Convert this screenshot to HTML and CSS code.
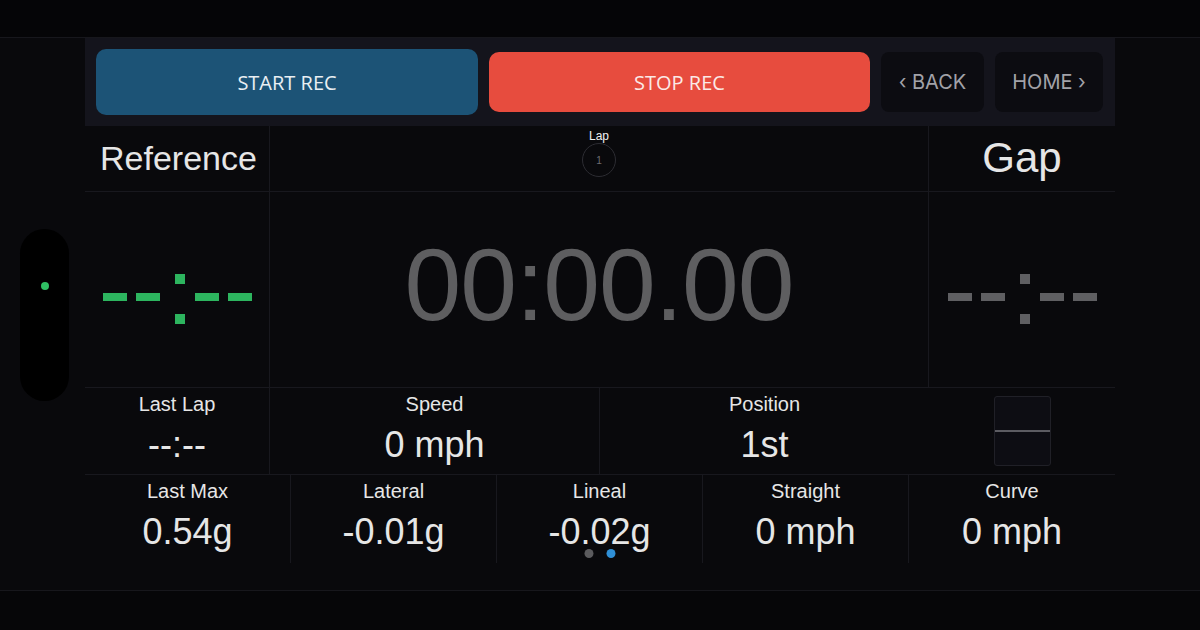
FILE: index.html
```html
<!DOCTYPE html>
<html lang="en">
<head>
    <meta charset="UTF-8">
    <meta name="viewport" content="width=device-width, initial-scale=1.0">
    <title>Lap Timer</title>
    <link rel="stylesheet" href="styles.css">
</head>
<body>
    <div class="statusbar"></div>

    <div class="main">
        <div class="side">
            <div class="pill"><span class="pill-dot"></span></div>
        </div>

        <div class="panel">
            <div class="toolbar">
                <button class="btn btn-start">START REC</button>
                <button class="btn btn-stop">STOP REC</button>
                <button class="btn btn-nav btn-back">&lsaquo; BACK</button>
                <button class="btn btn-nav btn-home">HOME &rsaquo;</button>
            </div>

            <div class="board">
                <div class="cell cell-title">Reference</div>
                <div class="cell cell-lap wide">
                    <span class="lap-label">Lap</span>
                    <span class="lap-num">1</span>
                </div>
                <div class="cell cell-gap">Gap</div>

                <div class="cell cell-dash">
                    <svg class="dash green" width="149" height="50" viewBox="0 0 149 50">
                        <rect x="0" y="19" width="24" height="8"/>
                        <rect x="33" y="19" width="24" height="8"/>
                        <rect x="72" y="0" width="10" height="10"/>
                        <rect x="72" y="40" width="10" height="10"/>
                        <rect x="92" y="19" width="24" height="8"/>
                        <rect x="125" y="19" width="24" height="8"/>
                    </svg>
                </div>
                <div class="cell cell-timer wide">00:00.00</div>
                <div class="cell cell-dash">
                    <svg class="dash grey" width="149" height="50" viewBox="0 0 149 50">
                        <rect x="0" y="19" width="24" height="8"/>
                        <rect x="33" y="19" width="24" height="8"/>
                        <rect x="72" y="0" width="10" height="10"/>
                        <rect x="72" y="40" width="10" height="10"/>
                        <rect x="92" y="19" width="24" height="8"/>
                        <rect x="125" y="19" width="24" height="8"/>
                    </svg>
                </div>

                <div class="cell stat">
                    <span class="stat-label">Last Lap</span>
                    <span class="stat-value">--:--</span>
                </div>
                <div class="cell stat">
                    <span class="stat-label">Speed</span>
                    <span class="stat-value">0 mph</span>
                </div>
                <div class="cell stat">
                    <span class="stat-label">Position</span>
                    <span class="stat-value">1st</span>
                </div>
                <div class="cell cell-meter">
                    <div class="meter"><span class="meter-line"></span></div>
                </div>
            </div>

            <div class="gforce">
                <div class="stat">
                    <span class="stat-label">Last Max</span>
                    <span class="stat-value">0.54g</span>
                </div>
                <div class="stat">
                    <span class="stat-label">Lateral</span>
                    <span class="stat-value">-0.01g</span>
                </div>
                <div class="stat">
                    <span class="stat-label">Lineal</span>
                    <span class="stat-value">-0.02g</span>
                </div>
                <div class="stat">
                    <span class="stat-label">Straight</span>
                    <span class="stat-value">0 mph</span>
                </div>
                <div class="stat">
                    <span class="stat-label">Curve</span>
                    <span class="stat-value">0 mph</span>
                </div>
            </div>

            <div class="pager">
                <span class="pager-dot"></span>
                <span class="pager-dot active"></span>
            </div>
        </div>

        <div class="side"></div>
    </div>

    <div class="homebar"></div>
</body>
</html>
```

FILE: styles.css
```css
body {
    margin: 0;
    height: 630px;
    display: flex;
    flex-direction: column;
    background-color: #09090c;
    color: #e6e6e6;
    font-family: "Liberation Sans", Arial, sans-serif;
    overflow: hidden;
}
.statusbar {
    height: 37px;
    background-color: #050507;
    border-bottom: 1px solid #17171c;
}
.homebar {
    height: 39px;
    background-color: #060608;
    border-top: 1px solid #17171c;
}
.main {
    flex: 1;
    display: flex;
}
.side {
    width: 85px;
    display: flex;
    align-items: center;
    justify-content: center;
}
.pill {
    width: 49px;
    height: 172px;
    margin-left: 4px;
    margin-top: 1px;
    border-radius: 25px;
    background-color: #000;
    display: flex;
    justify-content: center;
}
.pill-dot {
    width: 8px;
    height: 8px;
    margin-top: 53px;
    border-radius: 50%;
    background-color: #2fbf63;
}
.panel {
    width: 1030px;
    position: relative;
}

/* barra de botones */
.toolbar {
    height: 88px;
    box-sizing: border-box;
    padding: 11px 12px 11px 11px;
    display: flex;
    align-items: center;
    gap: 11px;
    background-color: #14141c;
}
.btn {
    border: none;
    padding: 0;
    font-size: 19px;
    cursor: pointer;
}
.btn-start {
    width: 382px;
    height: 66px;
    border-radius: 10px;
    background-color: #1c5376;
    color: #e9eff3;
    font-family: "Open Sans", sans-serif;
    font-size: 20px;
}
.btn-stop {
    width: 381px;
    height: 60px;
    border-radius: 10px;
    background-color: #e74c3e;
    color: #fbe9e6;
    font-family: "Open Sans", sans-serif;
    font-size: 20px;
}
.btn-nav {
    height: 60px;
    border-radius: 8px;
    background-color: #0c0c11;
    color: #a2a2a8;
    font-family: Inter, sans-serif;
    font-size: 20px;
}
.btn-back {
    width: 103px;
}
.btn-home {
    width: 108px;
}

/* tablero principal */
.board {
    display: grid;
    grid-template-columns: 185px 330px 329px 186px;
    grid-template-rows: 66px 196px 87px;
}
.cell {
    box-sizing: border-box;
    border-right: 1px solid #18181e;
    border-bottom: 1px solid #18181e;
}
.cell:nth-child(3n), .cell-meter {
    border-right: none;
}
.wide {
    grid-column: span 2;
}
.cell-title {
    font-size: 34px;
    padding-left: 15px;
    display: flex;
    align-items: center;
}
.cell-gap {
    font-size: 42px;
    display: flex;
    align-items: center;
    justify-content: center;
    padding-bottom: 2px;
}
.cell-lap {
    display: flex;
    flex-direction: column;
    align-items: center;
    padding-top: 3px;
}
.lap-label {
    font-size: 12px;
    line-height: 14px;
    color: #f0f0f0;
}
.lap-num {
    width: 32px;
    height: 32px;
    border: 1px solid #2c2c32;
    border-radius: 50%;
    font-size: 10px;
    color: #6e6e72;
    display: flex;
    align-items: center;
    justify-content: center;
}
.cell-dash {
    display: flex;
    align-items: center;
    justify-content: center;
    padding-top: 18px;
}
.cell-dash:nth-child(6) {
    padding-left: 1px;
}
.dash.green {
    fill: #2db55f;
}
.dash.grey {
    fill: #5f5f62;
}
.cell-timer {
    font-size: 102px;
    color: #5e5e60;
    display: flex;
    align-items: center;
    justify-content: center;
    padding-bottom: 8px;
    letter-spacing: -1px;
}
.stat {
    display: flex;
    flex-direction: column;
    align-items: center;
    padding-top: 4px;
    gap: 9px;
}
.stat-label {
    font-size: 20px;
    line-height: 24px;
}
.stat-value {
    font-size: 36px;
    line-height: 40px;
}
.cell-meter {
    display: flex;
    align-items: center;
    justify-content: center;
    padding-bottom: 1px;
}
.meter {
    width: 57px;
    height: 70px;
    box-sizing: border-box;
    border: 1px solid #202027;
    border-radius: 3px;
    background-color: #0d0d13;
    display: flex;
    align-items: center;
}
.meter-line {
    width: 100%;
    height: 2px;
    background-color: #5c5c62;
}

/* fila inferior */
.gforce {
    display: grid;
    grid-template-columns: repeat(5, 1fr);
    height: 88px;
}
.gforce .stat {
    border-right: 1px solid #18181e;
}
.gforce .stat:last-child {
    border-right: none;
}

.pager {
    position: absolute;
    left: 50%;
    bottom: 32px;
    transform: translateX(-50%);
    display: flex;
    gap: 13px;
}
.pager-dot {
    width: 9px;
    height: 9px;
    border-radius: 50%;
    background-color: #5b5b5e;
}
.pager-dot.active {
    background-color: #2f8fd6;
}
```
